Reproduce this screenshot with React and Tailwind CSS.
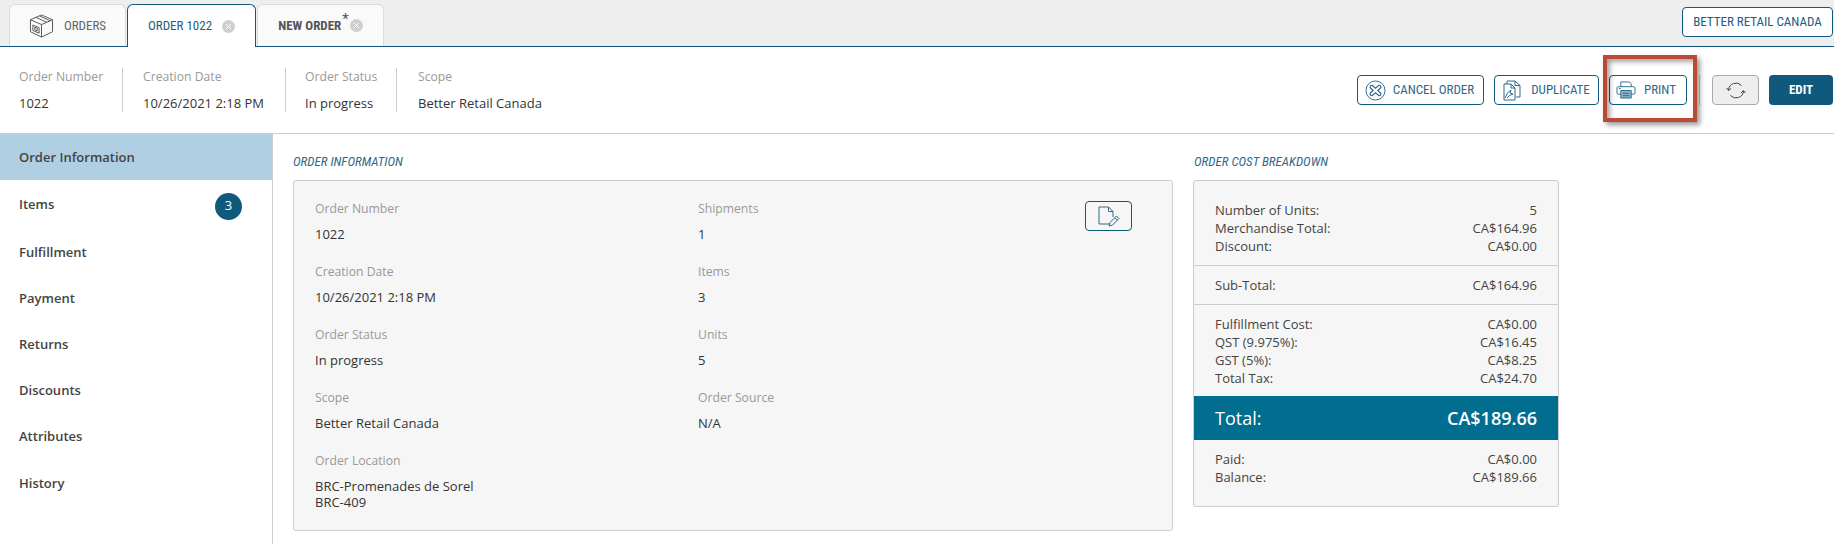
import React from "react";

const open = "font-['Open_Sans',sans-serif]";
const cond = "font-['Roboto',sans-serif] [font-stretch:75%]";

function BoxIcon() {
  return (
    <svg width="25" height="24" viewBox="0 0 26 25" fill="none" stroke="#555" strokeWidth="1">
      <path d="M13 1 L24.5 6 V18.5 L13 24 L1.5 18.5 V6 Z" />
      <path d="M1.5 6 L13 11 L24.5 6 M13 11 V24" />
      <path d="M7 3.4 L18.5 8.6 M11 2 L22 7" />
      <path d="M4 11.5 L10.5 14.3 V20 L4 17.2 Z M6 13.8 L8.6 15 V17.6 L6 16.4 Z" />
    </svg>
  );
}

function CloseDot() {
  return (
    <span className="w-[13px] h-[13px] rounded-full bg-[#cfcfcf] flex items-center justify-center">
      <svg width="7" height="7" viewBox="0 0 7 7" stroke="#fff" strokeWidth="1">
        <path d="M1 1 L6 6 M6 1 L1 6" />
      </svg>
    </span>
  );
}

function CancelIcon() {
  return (
    <svg width="21" height="21" viewBox="0 0 22 22" fill="none" stroke="#2c6a8a" strokeWidth="1">
      <circle cx="11" cy="11" r="10" />
      <path d="M7.5 5.5 L11 8.5 L14.5 5.5 Q17 5.5 16.5 8 L13.5 11 L16.5 14 Q17 16.5 14.5 16.5 L11 13.5 L7.5 16.5 Q5 16.5 5.5 14 L8.5 11 L5.5 8 Q5 5.5 7.5 5.5 Z" strokeWidth="1.3" />
    </svg>
  );
}

function DuplicateIcon() {
  return (
    <svg width="18" height="21" viewBox="0 0 18 21" fill="none" stroke="#2c6a8a" strokeWidth="1">
      <path d="M4 4 V1 H12 L17 5.5 V17 H13" />
      <path d="M12 1 V5.5 H17" />
      <path d="M1 4 H8 L12 8 V20 H1 Z" />
      <path d="M8 4 V8 H12" />
      <path d="M2 18 Q4 12 8 10 L7 13 L10 14 Q6 15 4 18" />
    </svg>
  );
}

function PrintIcon() {
  return (
    <svg width="20" height="18" viewBox="0 0 21 19" fill="none" stroke="#2c6a8a" strokeWidth="1">
      <path d="M5 6 V1 H14 L16 3 V6" />
      <path d="M5 14 H2.5 Q1 14 1 12.5 V7.5 Q1 6 2.5 6 H18.5 Q20 6 20 7.5 V12.5 Q20 14 18.5 14 H16" />
      <path d="M5 10 H16 V18 H5 Z" fill="#8fb4c9" />
      <path d="M7 13 H14 M7 15.5 H14" />
      <path d="M3 8 H5" />
    </svg>
  );
}

function RefreshIcon() {
  return (
    <svg width="20" height="17" viewBox="0 0 20 17" fill="none" stroke="#444" strokeWidth="1">
      <path d="M2.5 8 A7.5 7.5 0 0 1 15.5 3.5" />
      <path d="M17.5 9 A7.5 7.5 0 0 1 4.5 13.5" />
      <path d="M0.5 6 L2.5 8.5 L5 6.5" />
      <path d="M15 11 L17.5 8.5 L19.5 11" />
    </svg>
  );
}

function NoteEditIcon() {
  return (
    <svg width="22" height="21" viewBox="0 0 22 21" fill="none" stroke="#2c6a8a" strokeWidth="1">
      <path d="M12 18 H1 V1 H10.5 L15 5.5 V11" />
      <path d="M10.5 1 V5.5 H15" />
      <path d="M11 20 L12 16.5 L18.5 10 L21 12.5 L14.5 19 Z" />
      <path d="M16.8 11.7 L19.3 14.2" />
    </svg>
  );
}

function Tab({ active, children, w }) {
  return (
    <div
      className={
        "rounded-t-[6px] border border-b-0 flex items-center justify-center gap-[10px] text-[13px] " +
        cond +
        " " +
        w +
        (active
          ? " bg-white border-[#0f5a7c] text-[#1f5d7e] relative z-10 -mb-px h-[43px]"
          : " bg-[#fafafa] border-[#dcdcdc] text-[#666] h-[42px]")
      }
    >
      {children}
    </div>
  );
}

function ActionBtn({ children, w, gap = "gap-[7px] pr-[2px]" }) {
  return (
    <button
      className={
        "h-[30px] border border-[#0f5a7c] rounded-[4px] bg-white flex items-center justify-center text-[13px] text-[#2c6a8a] " +
        cond +
        " " +
        w +
        " " +
        gap
      }
    >
      {children}
    </button>
  );
}

function HeadField({ label, value, last, className }) {
  return (
    <div className={"h-[44px] flex flex-col justify-between whitespace-nowrap " + (last ? "" : "border-r border-[#ccc] ") + className}>
      <div className="text-[12.2px] leading-[18px] text-[#999]">{label}</div>
      <div className="text-[13px] leading-[18px] text-[#333]">{value}</div>
    </div>
  );
}

function InfoField({ label, children, className = "" }) {
  return (
    <div className={className}>
      <div className="text-[12.2px] leading-[18px] text-[#999]">{label}</div>
      <div className="mt-2 text-[13px] leading-[16px] text-[#333]">{children}</div>
    </div>
  );
}

function CostRow({ label, value }) {
  return (
    <div className="flex justify-between text-[13px] leading-[18px] text-[#444]">
      <span>{label}</span>
      <span>{value}</span>
    </div>
  );
}

const navItems = [
  { label: "Items", h: "h-[48px] pt-px" },
  { label: "Fulfillment", h: "h-[48px] pt-px" },
  { label: "Payment", h: "h-[46px]" },
  { label: "Returns", h: "h-[46px]" },
  { label: "Discounts", h: "h-[46px]" },
  { label: "Attributes", h: "h-[46px]" },
  { label: "History", h: "h-[47px]" },
];

export default function App() {
  return (
    <div className={"w-[1834px] h-[544px] overflow-hidden bg-white flex flex-col " + open}>
      {/* tab strip */}
      <div className="h-[47px] shrink-0 bg-[#eeeeee] border-b border-[#0f5a7c] flex items-end justify-between pl-[9px] pr-px">
        <div className="flex gap-px">
          <Tab w="w-[117px]">
            <BoxIcon />
            <span>ORDERS</span>
          </Tab>
          <Tab active w="w-[129px]">
            <span>ORDER 1022</span>
            <CloseDot />
          </Tab>
          <Tab w="w-[127px]">
            <span className="flex items-start font-bold text-[#555]">
              NEW ORDER<span className="text-[15px] leading-[12px] font-normal -mt-[3px] ml-px">*</span>
            </span>
            <span className="-ml-[9px]">
              <CloseDot />
            </span>
          </Tab>
        </div>
        <button className={"mb-[9px] w-[151px] h-[30px] border border-[#0f5a7c] rounded-[4px] bg-white text-[13px] text-[#1f5d7e] " + cond}>
          BETTER RETAIL CANADA
        </button>
      </div>

      {/* order header */}
      <div className="relative h-[87px] shrink-0 border-b border-[#ccc] flex items-center justify-between pl-[19px] pr-px">
        <div className="flex -mt-[1px]">
          <HeadField label="Order Number" value="1022" className="w-[104px]" />
          <HeadField label="Creation Date" value="10/26/2021 2:18 PM" className="w-[163px] pl-[20px]" />
          <HeadField label="Order Status" value="In progress" className="w-[111px] pl-[19px]" />
          <HeadField label="Scope" value="Better Retail Canada" last className="pl-[21px]" />
        </div>
        <div className="flex items-center">
          <ActionBtn w="w-[127px] mr-[10px]">
            <CancelIcon />
            <span>CANCEL ORDER</span>
          </ActionBtn>
          <ActionBtn w="w-[105px] mr-[10px]" gap="gap-[10px]">
            <DuplicateIcon />
            <span>DUPLICATE</span>
          </ActionBtn>
          <ActionBtn w="w-[78px]" gap="gap-[8px] pr-[4px]">
            <PrintIcon />
            <span>PRINT</span>
          </ActionBtn>
          <div className="w-px h-[30px] bg-[#ccc] ml-[12px] mr-[12px]" />
          <button className="w-[47px] h-[30px] border border-[#aaa] rounded-[4px] bg-[#eeeeee] flex items-center justify-center mr-[10px]">
            <RefreshIcon />
          </button>
          <button className={"w-[64px] h-[30px] rounded-[4px] bg-[#0f5a7c] text-white font-bold text-[13px] " + cond}>
            EDIT
          </button>
        </div>
        {/* red annotation round the print button */}
        <div className="absolute left-[1603px] top-[8px] w-[94px] h-[67px] border-[4px] border-[#b94a35] shadow-[3px_3px_5px_rgba(0,0,0,0.4),inset_3px_3px_5px_rgba(0,0,0,0.35)]" />
      </div>

      <div className="flex-1 flex min-h-0">
        {/* side nav */}
        <div className="w-[273px] shrink-0 border-r border-[#ccc]">
          <div className="h-[46px] bg-[#b0cfe3] flex items-center pl-[19px] pt-px text-[13px] font-semibold text-[#444]">
            Order Information
          </div>
          {navItems.map((item) => (
            <div key={item.label} className={"flex items-center justify-between pl-[19px] pr-[30px] text-[13px] font-semibold text-[#444] " + item.h}>
              <span>{item.label}</span>
              {item.label === "Items" && (
                <span className="w-[27px] h-[27px] rounded-full bg-[#0f5a7c] text-white font-normal flex items-center justify-center mt-[3px]">
                  3
                </span>
              )}
            </div>
          ))}
        </div>

        {/* content */}
        <div className="flex-1 pl-[20px] pt-[20px] flex gap-5 items-start">
          <div className="w-[880px]">
            <h3 className={"text-[13px] leading-[16px] italic font-normal text-[#2c6a8a] mb-[10px] " + cond}>
              ORDER INFORMATION
            </h3>
            <div className="relative h-[351px] rounded-[3px] border border-[#ccc] bg-[#f6f6f6] pl-[21px] pt-[19px] grid grid-cols-[383px_1fr] auto-rows-[63px]">
              <InfoField label="Order Number">1022</InfoField>
              <InfoField label="Shipments">1</InfoField>
              <InfoField label="Creation Date">10/26/2021 2:18 PM</InfoField>
              <InfoField label="Items">3</InfoField>
              <InfoField label="Order Status">In progress</InfoField>
              <InfoField label="Units">5</InfoField>
              <InfoField label="Scope">Better Retail Canada</InfoField>
              <InfoField label="Order Source">N/A</InfoField>
              <InfoField label="Order Location">
                BRC-Promenades de Sorel
                <br />
                BRC-409
              </InfoField>
              <button className="absolute top-[20px] right-[40px] w-[47px] h-[30px] rounded-[4px] border border-[#0f5a7c] flex items-center justify-center">
                <NoteEditIcon />
              </button>
            </div>
          </div>

          <div className="w-[366px]">
            <h3 className={"pl-px text-[13px] leading-[16px] italic font-normal text-[#2c6a8a] mb-[10px] " + cond}>
              ORDER COST BREAKDOWN
            </h3>
            <div className="rounded-[3px] border border-[#ccc] bg-[#f6f6f6]">
              <div className="px-[21px] pt-[20px] pb-[10px] border-b border-[#ccc]">
                <CostRow label="Number of Units:" value="5" />
                <CostRow label="Merchandise Total:" value="CA$164.96" />
                <CostRow label="Discount:" value="CA$0.00" />
              </div>
              <div className="px-[21px] py-[10px] border-b border-[#ccc]">
                <CostRow label="Sub-Total:" value="CA$164.96" />
              </div>
              <div className="px-[21px] pt-[10px] pb-[9px]">
                <CostRow label="Fulfillment Cost:" value="CA$0.00" />
                <CostRow label="QST (9.975%):" value="CA$16.45" />
                <CostRow label="GST (5%):" value="CA$8.25" />
                <CostRow label="Total Tax:" value="CA$24.70" />
              </div>
              <div className="h-[44px] bg-[#016e8f] px-[21px] flex items-center justify-between text-white">
                <span className="text-[18px]">Total:</span>
                <span className="text-[18px] font-semibold">CA$189.66</span>
              </div>
              <div className="px-[21px] pt-[10px] pb-[20px]">
                <CostRow label="Paid:" value="CA$0.00" />
                <CostRow label="Balance:" value="CA$189.66" />
              </div>
            </div>
          </div>
        </div>
      </div>
    </div>
  );
}
